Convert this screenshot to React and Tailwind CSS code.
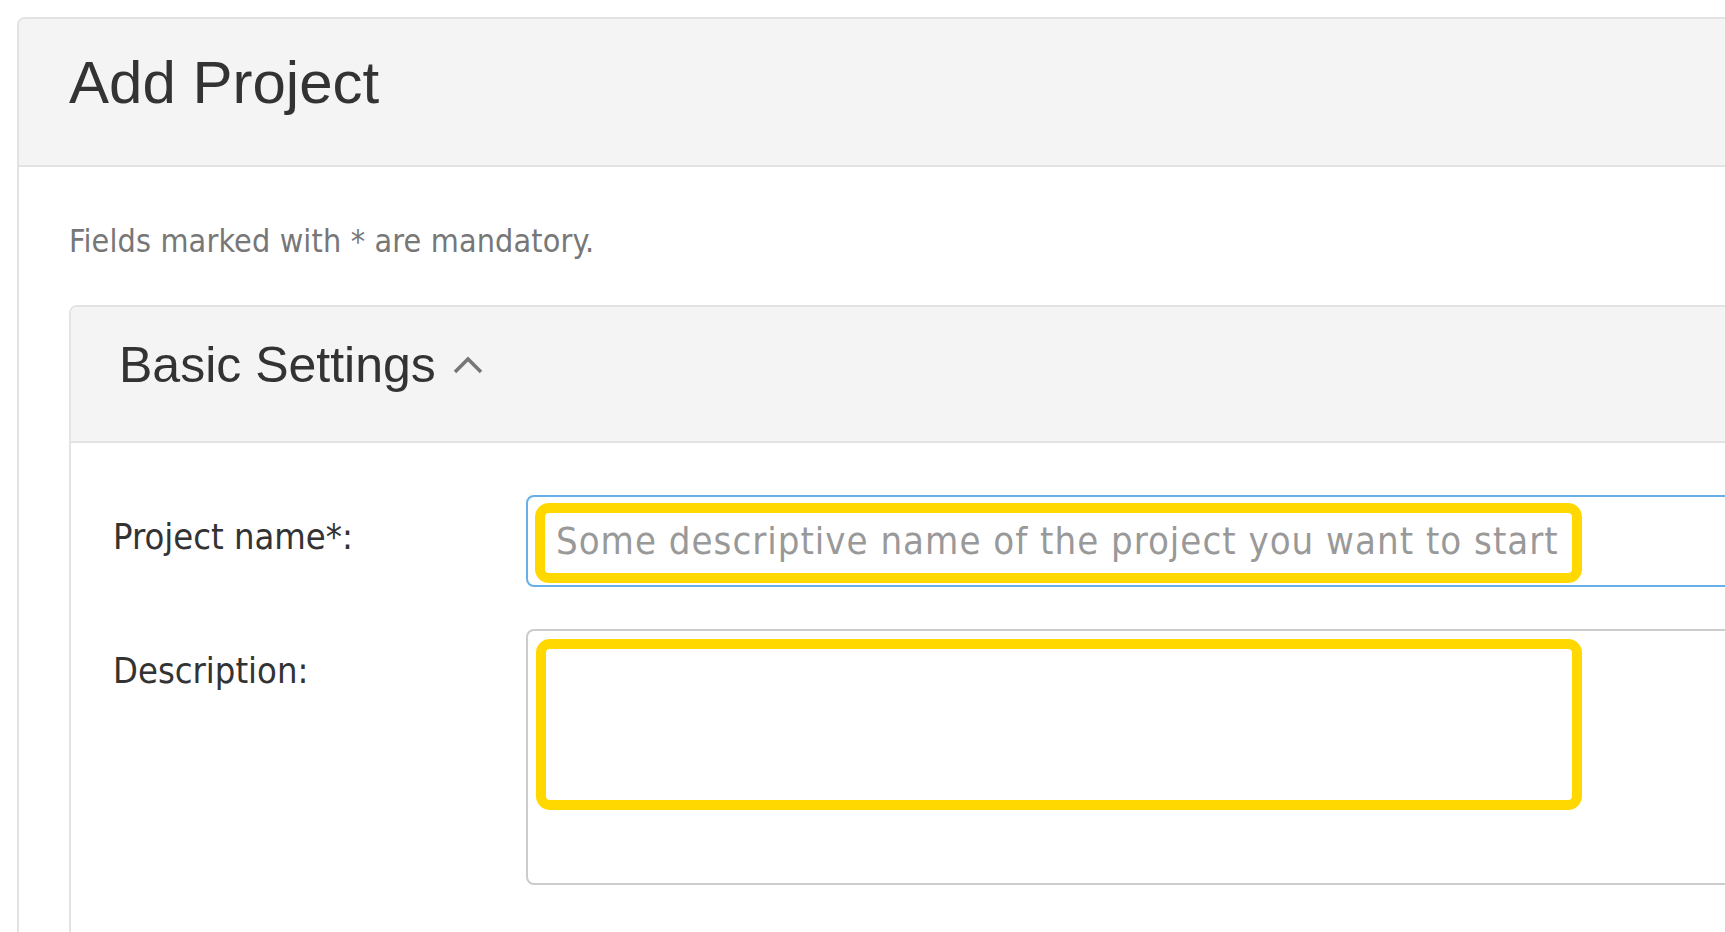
import React from 'react';

const body = "font-['DejaVu_Sans_Condensed','DejaVu_Sans',sans-serif]";
const head = "font-['Liberation_Sans',Arial,sans-serif]";

const ChevronUp = () => (
  <svg width="30" height="18" viewBox="0 0 30 18" className="ml-[17px] shrink-0">
    <polyline points="2,16 15,3 28,16" fill="none" stroke="#777" strokeWidth="3.6" />
  </svg>
);

const FormRow = ({ label, children }) => (
  <div className="flex">
    <label className={`w-[413px] shrink-0 pt-[24px] text-[36px] leading-[36px] text-[#333] ${body}`}>
      {label}
    </label>
    <div className="relative flex-1">{children}</div>
  </div>
);

export default function App() {
  return (
    <div className="h-screen w-screen overflow-hidden bg-white">
      <div className="ml-[17px] mt-[17px] w-[1780px] rounded-tl-[8px] border-2 border-[#e3e3e3] bg-white">
        <div className="h-[148px] rounded-tl-[6px] border-b-2 border-[#e3e3e3] bg-[#f4f4f4] pl-[50px] pt-[34px]">
          <h1 className={`text-[60px] leading-[60px] text-[#333] ${head}`}>Add Project</h1>
        </div>

        <div className="pl-[50px] pt-[58px]">
          <p className={`text-[32px] leading-[32px] tracking-[0.15px] text-[#777] ${body}`}>
            Fields marked with * are mandatory.
          </p>

          <div className="mt-[48px] h-[700px] rounded-tl-[8px] border-2 border-[#e3e3e3]">
            <div className="h-[136px] rounded-tl-[6px] border-b-2 border-[#e3e3e3] bg-[#f4f4f4] pl-[48px] pt-[33px]">
              <h3 className={`flex items-center text-[50px] leading-[50px] text-[#333] ${head}`}>
                Basic Settings
                <ChevronUp />
              </h3>
            </div>

            <div className="flex flex-col gap-[42px] pl-[42px] pt-[52px]">
              <FormRow label="Project name*:">
                <input
                  type="text"
                  placeholder="Some descriptive name of the project you want to start"
                  className={`block h-[92px] w-full rounded-l-[8px] border-2 border-[#66afe9] bg-white pl-[28px] text-[38px] tracking-[1px] text-[#333] outline-none placeholder:text-[#999] ${body}`}
                />
                <div className="pointer-events-none absolute left-[9px] top-[8px] h-[80px] w-[1047px] rounded-[14px] border-[10px] border-[#ffd800]" />
              </FormRow>

              <FormRow label="Description:">
                <textarea
                  className={`block h-[256px] w-full resize-none rounded-l-[8px] border-2 border-[#ccc] bg-white p-[20px] text-[36px] text-[#333] outline-none ${body}`}
                />
                <div className="pointer-events-none absolute left-[10px] top-[10px] h-[171px] w-[1046px] rounded-[14px] border-[10px] border-[#ffd800]" />
              </FormRow>
            </div>
          </div>
        </div>
      </div>
    </div>
  );
}
